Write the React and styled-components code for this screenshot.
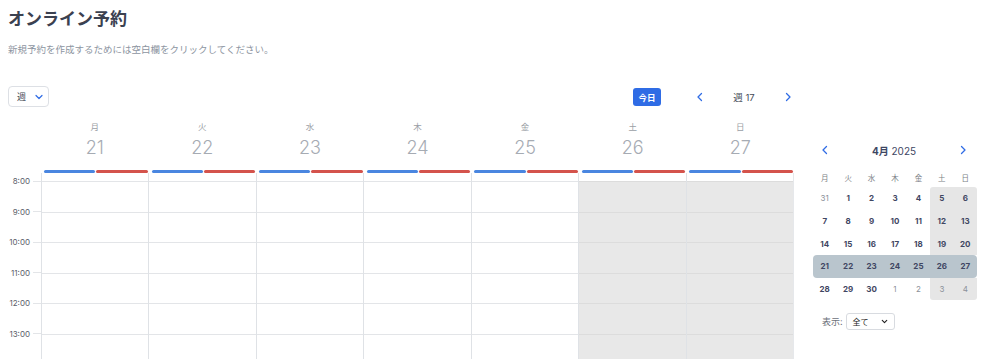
import React from 'react';
import styled, { createGlobalStyle } from 'styled-components';

const GlobalStyle = createGlobalStyle`
  html, body {
    margin: 0;
    padding: 0;
    background: #fff;
    overflow: hidden;
  }
  body {
    font-family: Inter, "Noto Sans CJK JP", sans-serif;
    color: #3a3f4b;
  }
`;

const Page = styled.div`
  width: 984px;
  height: 359px;
  padding-top: 8px;
  box-sizing: border-box;
  overflow: hidden;
`;

const Title = styled.h1`
  margin: 0 0 0 8px;
  font-size: 17px;
  line-height: 22px;
  font-weight: 700;
  color: #3b4150;
`;

const Subtitle = styled.p`
  margin: 13px 0 0 8px;
  font-size: 9.5px;
  line-height: 14px;
  color: #8d95a1;
`;

const Body = styled.div`
  display: flex;
  margin-top: 29px;
`;

const Main = styled.div`
  width: 794px;
  flex-shrink: 0;
`;

const Toolbar = styled.div`
  display: flex;
  align-items: center;
  justify-content: space-between;
  height: 21px;
  padding-left: 8px;
`;

const ViewSelect = styled.div`
  display: flex;
  align-items: center;
  gap: 7px;
  height: 21px;
  width: 41px;
  box-sizing: border-box;
  padding: 0 6px 0 8px;
  border: 1px solid #dde0e5;
  border-radius: 4px;
  font-size: 9px;
  color: #444a55;

  svg {
    flex-shrink: 0;
  }
`;

const NavGroup = styled.div`
  display: flex;
  align-items: center;
`;

const TodayButton = styled.button`
  width: 28px;
  height: 18px;
  padding: 0;
  border: none;
  border-radius: 3px;
  background: #2f6ce5;
  color: #fff;
  font-family: inherit;
  font-size: 8.5px;
  font-weight: 600;
  margin-right: 33px;
`;

const NavArrow = styled.span`
  display: flex;
  width: 12px;
  justify-content: center;
  color: #2f6ce5;
`;

const WeekLabel = styled.span`
  width: 76px;
  text-align: center;
  font-size: 9.5px;
  color: #444a55;
`;

const DayHeaderRow = styled.div`
  display: flex;
  margin-top: 14px;
  margin-left: 41px;
`;

const DayHeader = styled.div`
  flex: 1;
  display: flex;
  flex-direction: column;
  align-items: center;
`;

const DayName = styled.div`
  font-size: 8.5px;
  line-height: 12px;
  color: #9a9ea5;
`;

const DayNumber = styled.div`
  margin-top: 4px;
  font-size: 18px;
  line-height: 22px;
  font-weight: 300;
  color: #a6abb3;
`;

const Bars = styled.div`
  display: flex;
  gap: 1px;
  width: 100%;
  box-sizing: border-box;
  padding: 0 1px 0 3px;
  margin-top: 11px;
`;

const Bar = styled.div`
  flex: 1;
  height: 3px;
  border-radius: 1.5px;
  background: ${(p) => p.$color};
`;

const Grid = styled.div`
  display: flex;
`;

const Gutter = styled.div`
  width: 41px;
  flex-shrink: 0;
  padding-top: 3px;
`;

const TimeRow = styled.div`
  height: 30.6px;
  display: flex;
  align-items: flex-start;
`;

const TimeLabel = styled.div`
  display: flex;
  align-items: center;
  height: 10px;
  width: 100%;
  font-size: 8px;
  color: #5b606a;

  span {
    flex: 1;
    text-align: right;
    padding-right: 3px;
  }

  i {
    width: 8px;
    height: 1px;
    background: #e3e5e8;
  }
`;

const DayColumn = styled.div`
  flex: 1;
  border-left: 1px solid #dfe2e6;
  ${(p) => p.$last && 'border-right: 1px solid #e6e8eb;'}
  padding-top: 8px;
`;

const Slot = styled.div`
  height: 30.6px;
  box-sizing: border-box;
  border-top: 1px solid ${(p) => (p.$weekend ? '#dcdcdc' : '#e3e5e8')};
  background: ${(p) => (p.$weekend ? '#e8e8e8' : '#fff')};
`;

const Sidebar = styled.div`
  width: 164px;
  margin-left: 19px;
  padding-top: 55px;
`;

const MiniHeader = styled.div`
  display: flex;
  align-items: center;
  justify-content: space-between;
  height: 18px;
  padding: 0 8px 0 6px;
  margin-bottom: 9px;
`;

const MonthLabel = styled.div`
  font-size: 10px;
  color: #3d4663;

  b {
    font-weight: 700;
  }
`;

const MiniRow = styled.div`
  display: grid;
  grid-template-columns: repeat(7, 1fr);
  height: ${(p) => (p.$head ? '19px' : '22.7px')};
  border-radius: ${(p) => (p.$active ? '4px' : '0')};
  background: ${(p) => (p.$active ? '#b9c5cd' : 'transparent')};
`;

const MiniCell = styled.div`
  display: flex;
  align-items: center;
  justify-content: center;
  font-size: ${(p) => (p.$head ? '7.5px' : '8px')};
  font-weight: ${(p) => (p.$head || p.$muted ? 400 : 700)};
  color: ${(p) => (p.$head ? '#7b7f86' : p.$muted ? '#8b9099' : '#3f4662')};
  background: ${(p) => (p.$shade ? '#e6e6e6' : 'transparent')};
  ${(p) => p.$roundTopLeft && 'border-top-left-radius: 3px;'}
  ${(p) => p.$roundTopRight && 'border-top-right-radius: 3px;'}
  ${(p) => p.$roundBottomLeft && 'border-bottom-left-radius: 3px;'}
  ${(p) => p.$roundBottomRight && 'border-bottom-right-radius: 3px;'}
`;

const FilterRow = styled.div`
  display: flex;
  align-items: center;
  gap: 3px;
  margin-top: 13px;
  padding-left: 9px;
  font-size: 9px;
  color: #6b707a;
`;

const FilterSelect = styled.div`
  display: flex;
  align-items: center;
  justify-content: space-between;
  width: 49px;
  height: 17px;
  box-sizing: border-box;
  padding: 0 5px 0 6px;
  border: 1px solid #d8dbe0;
  border-radius: 3px;
  font-size: 8px;
  color: #222;
`;

const Chevron = ({ dir = 'down', size = 12, color = 'currentColor', width = 2 }) => {
  const paths = {
    down: 'M6 9l6 6 6-6',
    left: 'M15 5l-7 7 7 7',
    right: 'M9 5l7 7-7 7',
  };
  return (
    <svg width={size} height={size} viewBox="0 0 24 24" fill="none" stroke={color} strokeWidth={width} strokeLinecap="round" strokeLinejoin="round">
      <path d={paths[dir]} />
    </svg>
  );
};

const days = [
  { name: '月', num: 21 },
  { name: '火', num: 22 },
  { name: '水', num: 23 },
  { name: '木', num: 24 },
  { name: '金', num: 25 },
  { name: '土', num: 26, weekend: true },
  { name: '日', num: 27, weekend: true },
];

const hours = ['8:00', '9:00', '10:00', '11:00', '12:00', '13:00'];

const miniWeeks = [
  [[31, true], [1], [2], [3], [4], [5], [6]],
  [[7], [8], [9], [10], [11], [12], [13]],
  [[14], [15], [16], [17], [18], [19], [20]],
  [[21], [22], [23], [24], [25], [26], [27]],
  [[28], [29], [30], [1, true], [2, true], [3, true], [4, true]],
];

const miniHead = ['月', '火', '水', '木', '金', '土', '日'];

export default function App() {
  return (
    <>
      <GlobalStyle />
      <Page>
        <Title>オンライン予約</Title>
        <Subtitle>新規予約を作成するためには空白欄をクリックしてください。</Subtitle>
        <Body>
          <Main>
            <Toolbar>
              <ViewSelect>
                <span>週</span>
                <Chevron dir="down" size={12} color="#2f6ce5" width={2.4} />
              </ViewSelect>
              <NavGroup>
                <TodayButton>今日</TodayButton>
                <NavArrow>
                  <Chevron dir="left" size={12} width={2.6} />
                </NavArrow>
                <WeekLabel>週 17</WeekLabel>
                <NavArrow>
                  <Chevron dir="right" size={12} width={2.6} />
                </NavArrow>
              </NavGroup>
            </Toolbar>

            <DayHeaderRow>
              {days.map((d) => (
                <DayHeader key={d.num}>
                  <DayName>{d.name}</DayName>
                  <DayNumber>{d.num}</DayNumber>
                  <Bars>
                    <Bar $color="#4a86e0" />
                    <Bar $color="#d4534c" />
                  </Bars>
                </DayHeader>
              ))}
            </DayHeaderRow>

            <Grid>
              <Gutter>
                {hours.map((h) => (
                  <TimeRow key={h}>
                    <TimeLabel>
                      <span>{h}</span>
                      <i />
                    </TimeLabel>
                  </TimeRow>
                ))}
              </Gutter>
              {days.map((d, i) => (
                <DayColumn key={d.num} $last={i === days.length - 1}>
                  {hours.map((h) => (
                    <Slot key={h} $weekend={d.weekend} />
                  ))}
                </DayColumn>
              ))}
            </Grid>
          </Main>

          <Sidebar>
            <MiniHeader>
              <NavArrow>
                <Chevron dir="left" size={12} width={2.6} />
              </NavArrow>
              <MonthLabel>
                <b>4月</b> 2025
              </MonthLabel>
              <NavArrow>
                <Chevron dir="right" size={12} width={2.6} />
              </NavArrow>
            </MiniHeader>
            <MiniRow $head>
              {miniHead.map((n) => (
                <MiniCell key={n} $head>
                  {n}
                </MiniCell>
              ))}
            </MiniRow>
            {miniWeeks.map((week, wi) => {
              const active = wi === 3;
              return (
                <MiniRow key={wi} $active={active}>
                  {week.map(([n, muted], ci) => (
                    <MiniCell
                      key={ci}
                      $muted={muted}
                      $shade={!active && ci >= 5}
                      $roundTopLeft={wi === 0 && ci === 5}
                      $roundTopRight={wi === 0 && ci === 6}
                      $roundBottomLeft={wi === 4 && ci === 5}
                      $roundBottomRight={wi === 4 && ci === 6}
                    >
                      {n}
                    </MiniCell>
                  ))}
                </MiniRow>
              );
            })}
            <FilterRow>
              <span>表示:</span>
              <FilterSelect>
                <span>全て</span>
                <Chevron dir="down" size={9} color="#222" width={3} />
              </FilterSelect>
            </FilterRow>
          </Sidebar>
        </Body>
      </Page>
    </>
  );
}
